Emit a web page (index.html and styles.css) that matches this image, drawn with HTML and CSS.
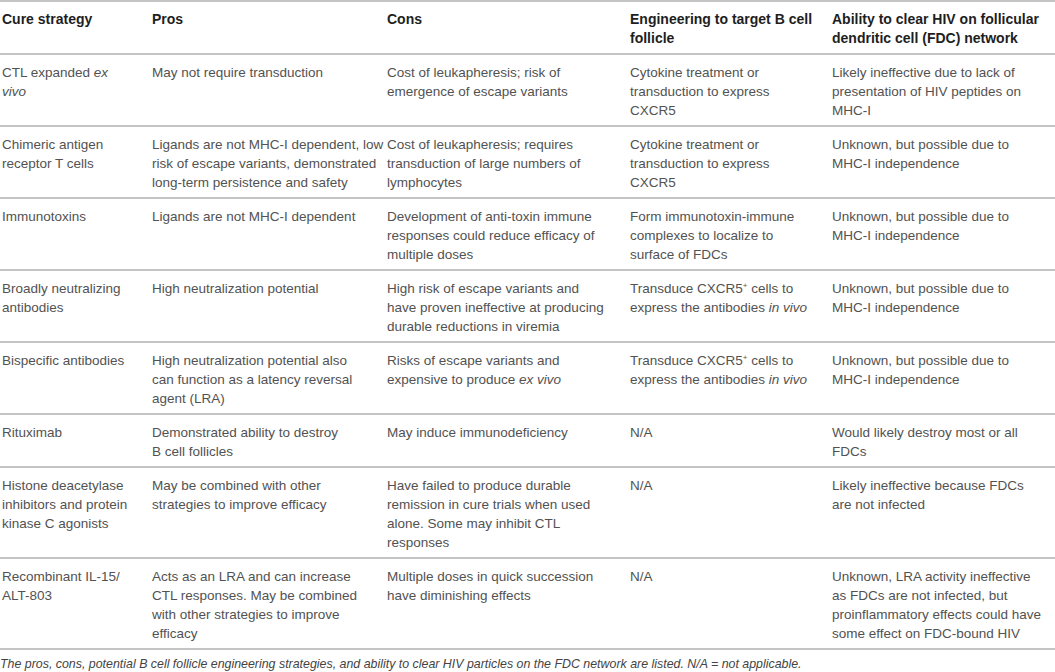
FILE: index.html
```html
<!DOCTYPE html>
<html lang="en">
<head>
  <meta charset="UTF-8" />
  <title>HIV cure strategies and the B cell follicle</title>
  <link rel="stylesheet" href="styles.css">
</head>
<body>
  <figure class="table-wrap">
    <table class="cure-table">
      <colgroup>
        <col class="c-strategy">
        <col class="c-pros">
        <col class="c-cons">
        <col class="c-eng">
        <col class="c-fdc">
      </colgroup>
      <thead>
        <tr>
          <th>Cure strategy</th>
          <th>Pros</th>
          <th>Cons</th>
          <th>Engineering to target B cell<br>follicle</th>
          <th>Ability to clear HIV on follicular<br>dendritic cell (FDC) network</th>
        </tr>
      </thead>
      <tbody>
        <tr>
          <td>CTL expanded <i>ex</i><br><i>vivo</i></td>
          <td>May not require transduction</td>
          <td>Cost of leukapheresis; risk of<br>emergence of escape variants</td>
          <td>Cytokine treatment or<br>transduction to express<br>CXCR5</td>
          <td>Likely ineffective due to lack of<br>presentation of HIV peptides on<br>MHC-I</td>
        </tr>
        <tr>
          <td>Chimeric antigen<br>receptor T cells</td>
          <td>Ligands are not MHC-I dependent, low<br>risk of escape variants, demonstrated<br>long-term persistence and safety</td>
          <td>Cost of leukapheresis; requires<br>transduction of large numbers of<br>lymphocytes</td>
          <td>Cytokine treatment or<br>transduction to express<br>CXCR5</td>
          <td>Unknown, but possible due to<br>MHC-I independence</td>
        </tr>
        <tr>
          <td>Immunotoxins</td>
          <td>Ligands are not MHC-I dependent</td>
          <td>Development of anti-toxin immune<br>responses could reduce efficacy of<br>multiple doses</td>
          <td>Form immunotoxin-immune<br>complexes to localize to<br>surface of FDCs</td>
          <td>Unknown, but possible due to<br>MHC-I independence</td>
        </tr>
        <tr>
          <td>Broadly neutralizing<br>antibodies</td>
          <td>High neutralization potential</td>
          <td>High risk of escape variants and<br>have proven ineffective at producing<br>durable reductions in viremia</td>
          <td>Transduce CXCR5<sup>+</sup> cells to<br>express the antibodies <i>in vivo</i></td>
          <td>Unknown, but possible due to<br>MHC-I independence</td>
        </tr>
        <tr>
          <td>Bispecific antibodies</td>
          <td>High neutralization potential also<br>can function as a latency reversal<br>agent (LRA)</td>
          <td>Risks of escape variants and<br>expensive to produce <i>ex vivo</i></td>
          <td>Transduce CXCR5<sup>+</sup> cells to<br>express the antibodies <i>in vivo</i></td>
          <td>Unknown, but possible due to<br>MHC-I independence</td>
        </tr>
        <tr>
          <td>Rituximab</td>
          <td>Demonstrated ability to destroy<br>B cell follicles</td>
          <td>May induce immunodeficiency</td>
          <td>N/A</td>
          <td>Would likely destroy most or all<br>FDCs</td>
        </tr>
        <tr>
          <td>Histone deacetylase<br>inhibitors and protein<br>kinase C agonists</td>
          <td>May be combined with other<br>strategies to improve efficacy</td>
          <td>Have failed to produce durable<br>remission in cure trials when used<br>alone. Some may inhibit CTL<br>responses</td>
          <td>N/A</td>
          <td>Likely ineffective because FDCs<br>are not infected</td>
        </tr>
        <tr>
          <td>Recombinant IL-15/<br>ALT-803</td>
          <td>Acts as an LRA and can increase<br>CTL responses. May be combined<br>with other strategies to improve<br>efficacy</td>
          <td>Multiple doses in quick succession<br>have diminishing effects</td>
          <td>N/A</td>
          <td>Unknown, LRA activity ineffective<br>as FDCs are not infected, but<br>proinflammatory effects could have<br>some effect on FDC-bound HIV</td>
        </tr>
      </tbody>
    </table>
    <figcaption class="caption">The pros, cons, potential B cell follicle engineering strategies, and ability to clear HIV particles on the FDC network are listed. N/A = not applicable.</figcaption>
  </figure>
</body>
</html>
```

FILE: styles.css
```css
* { margin: 0; padding: 0; box-sizing: border-box; }

html,
body {
  background: #fff;
  font-family: "Liberation Sans", Arial, sans-serif;
  color: #525252;
}

.table-wrap {
  width: 1055px;
}

.cure-table {
  width: 100%;
  table-layout: fixed;
  border-collapse: collapse;
  border-top: 2px solid #c4c4c4;
}

.c-strategy { width: 152px; }
.c-pros     { width: 235px; }
.c-cons     { width: 243px; }
.c-eng      { width: 202px; }
.c-fdc      { width: 223px; }

.cure-table th,
.cure-table td {
  text-align: left;
  vertical-align: top;
  white-space: nowrap;
  padding: 8px 0 5px 0;
  line-height: 19px;
  border-bottom: 2px solid #c4c4c4;
}

.cure-table th:first-child,
.cure-table td:first-child {
  padding-left: 2px;
}

.cure-table th {
  font-size: 14px;
  font-weight: 700;
  color: #1e1e1e;
}

.cure-table td {
  font-size: 13.5px;
}

.cure-table sup {
  font-size: 8px;
  line-height: 0;
  vertical-align: 5px;
}

.caption {
  padding-top: 7px;
  font-size: 12.4px;
  font-style: italic;
  color: #444;
  line-height: 14px;
}
```
